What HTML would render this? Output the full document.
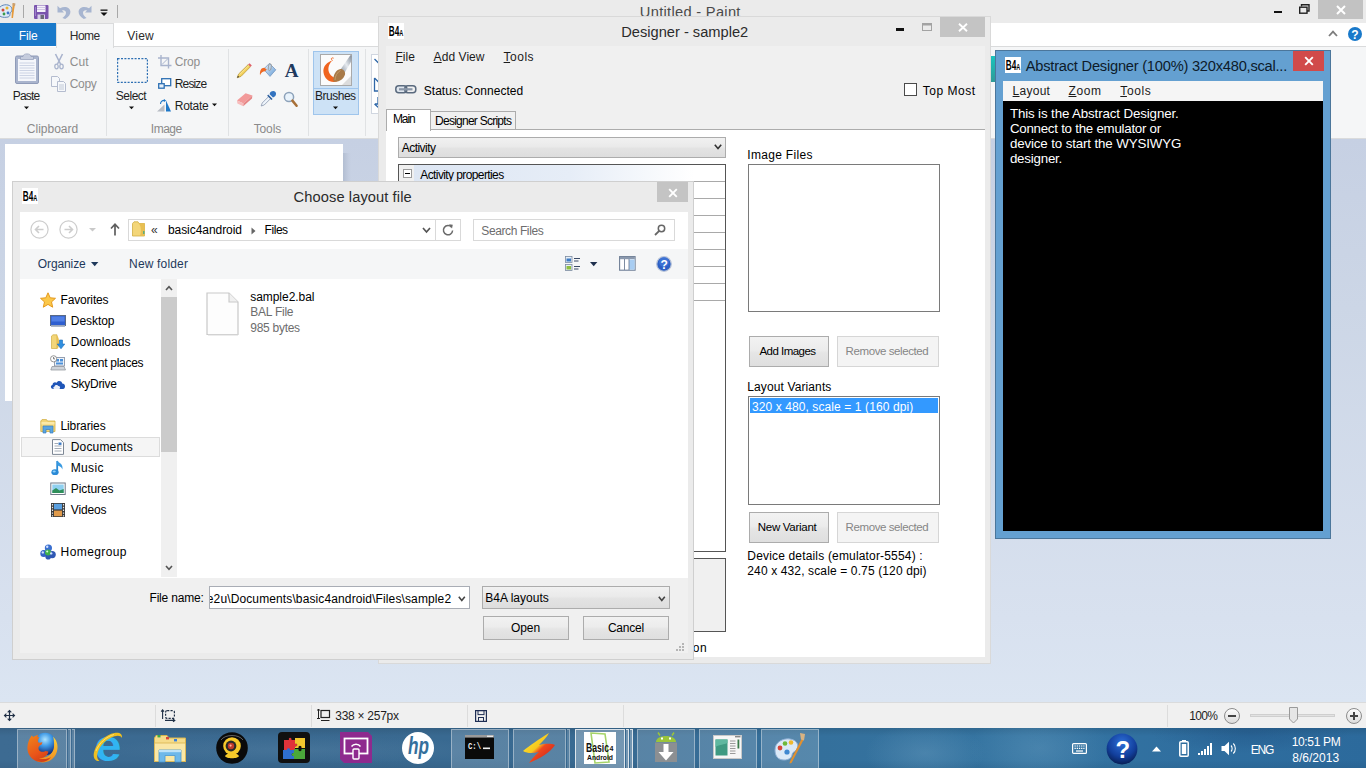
<!DOCTYPE html>
<html>
<head>
<meta charset="utf-8">
<title>Untitled - Paint</title>
<style>
*{box-sizing:border-box;margin:0;padding:0}
html,body{width:1366px;height:768px;overflow:hidden;background:#d5deec;font-family:"Liberation Sans",sans-serif;font-size:12px;color:#000}
.a{position:absolute}
.t{position:absolute;white-space:nowrap;line-height:1}
svg{position:absolute;overflow:visible}
/* ---------- Paint ---------- */
#paint{left:0;top:0;width:1366px;height:728px;background:#ebebeb}
#ptabs{left:0;top:23px;width:1366px;height:24px;background:#fff}
#pribbon{left:0;top:47px;width:1366px;height:92px;background:#f5f6f7;border-bottom:1px solid #dadbdc}
#pwork{left:0;top:139px;width:1366px;height:563px;background:linear-gradient(#c6d0e3,#ccd6e6 30%,#d8e1ef 85%,#dbe5f2)}
#pstatus{left:0;top:702px;width:1366px;height:26px;background:#f0f0f0;border-top:1px solid #dadbdc}
#taskbar{left:0;top:728px;width:1366px;height:40px;background:#2f6793}
.rt{position:absolute;white-space:nowrap;line-height:1;font-size:12px;color:#1e1e1e}
.rg{color:#8d8d8d}
/* ---------- Designer ---------- */
#designer{left:378px;top:16px;width:613px;height:648px;background:#ebebeb;border:1px solid #d9d9d9}
#dcontent{left:386px;top:46px;width:599px;height:611px;background:#f0f0f0}
#dwhite{left:386px;top:130px;width:599px;height:527px;background:#fff}
.ms{font-family:"Liberation Sans",sans-serif;font-size:11px}
/* ---------- Abstract designer ---------- */
#abs{left:995px;top:50px;width:336px;height:489px;background:#64a0d1;border:1px solid #4b769b}
#absmenu{left:1003px;top:81px;width:320px;height:20px;background:#f5f5f5}
#absblack{left:1003px;top:101px;width:320px;height:430px;background:#000}
/* ---------- Dialog ---------- */
#dlg{left:12px;top:181px;width:682px;height:479px;background:#ebebeb;border:1px solid #cfcfcf}
#dlgin{left:20px;top:212px;width:668px;height:441px;background:#f0f0f0}
#dlgnav{left:20px;top:212px;width:668px;height:37px;background:#fff}
#dlgtool{left:20px;top:249px;width:668px;height:30px;background:#f5f6f7}
#dlgbody{left:20px;top:279px;width:668px;height:299px;background:#fff}
.se{font-family:"Liberation Sans",sans-serif;font-size:12px;color:#000}
</style>
</head>
<body>
<!-- ================= PAINT WINDOW ================= -->
<div id="paint" class="a"></div>
<div id="ptabs" class="a"></div>
<div id="pribbon" class="a"></div>
<div id="pwork" class="a"></div>
<div id="pstatus" class="a"></div>
<svg style="left:0px;top:2px" width="17" height="18" viewBox="0 0 17 18"><path d="M-2 10 C-2 4 4 2 8 3 C12 4 13 8 11 10 C9 12 11 14 8 15 C3 16 -2 15 -2 10Z" fill="#dfeaf6" stroke="#5f86b8" stroke-width="1"/>
<circle cx="3" cy="8" r="1.5" fill="#d04a3a"/><circle cx="7" cy="6" r="1.5" fill="#e8b532"/><circle cx="4" cy="12" r="1.4" fill="#3a9a4a"/><circle cx="8" cy="11" r="1.4" fill="#3f77c9"/>
<path d="M13 1 L15 2 L14 8 L13 16 L11.5 16 L12 8Z" fill="#e59a3c"/><path d="M12.5 1 L15.5 1.5 L15 4 L12.5 3.5Z" fill="#c9a070"/></svg>
<div class="a" style="left:23px;top:5px;width:1px;height:13px;background:#a8a8a8;"></div>
<svg style="left:34px;top:5px" width="15" height="15" viewBox="0 0 15 15"><rect x="0" y="0" width="14.5" height="14" rx="1" fill="#7a54ad"/><rect x="3" y="0.5" width="8.5" height="6.5" fill="#f4f0fa"/><rect x="3" y="2.2" width="8.5" height="0.8" fill="#c9bde0"/><rect x="3" y="4.2" width="8.5" height="0.8" fill="#c9bde0"/><rect x="3.5" y="9.5" width="7.5" height="4.5" fill="#d9d0ea"/><rect x="6.5" y="10" width="3.5" height="4" fill="#6b6b78"/><rect x="1" y="2" width="1" height="9" fill="#9d80c8"/></svg>
<svg style="left:57px;top:5px" width="14" height="14" viewBox="0 0 14 14"><path d="M.5 .8 L.5 7.5 L7 7.5 L5 5.4 C7 4.6 9 5.6 9 7.8 C9 9.8 7.6 11.4 5.4 13 L8.2 14 C11.8 11.8 13.6 9.4 13.4 6.6 C13.2 2.4 8 .4 3 3.2Z" fill="#a7b5d0"/></svg>
<svg style="left:78px;top:5px" width="14" height="14" viewBox="0 0 14 14"><path d="M13.5 .8 L13.5 7.5 L7 7.5 L9 5.4 C7 4.6 5 5.6 5 7.8 C5 9.8 6.4 11.4 8.6 13 L5.8 14 C2.2 11.8 .4 9.4 .6 6.6 C.8 2.4 6 .4 11 3.2Z" fill="#a7b5d0"/></svg>
<svg style="left:100px;top:9px" width="8" height="8" viewBox="0 0 8 8"><rect x="0.5" y="0.5" width="7" height="1.3" fill="#111"/><path d="M0.5 3.5 L7.5 3.5 L4 7Z" fill="#111"/></svg>
<div class="a" style="left:117px;top:5px;width:1px;height:13px;background:#a8a8a8;"></div>
<div class="t" style="left:639.8px;top:5px;font-size:14.67px;color:#4a4a4a;letter-spacing:0.30px;">Untitled - Paint</div>
<div class="a" style="left:1274px;top:11px;width:8px;height:2px;background:#111;"></div>
<svg style="left:1299px;top:4px" width="11" height="10" viewBox="0 0 11 10"><path d="M2.5 2.5 V0.8 H10 V7 H8" fill="none" stroke="#222" stroke-width="1.4"/><rect x="0.7" y="3.2" width="7.3" height="6" fill="none" stroke="#222" stroke-width="1.4"/></svg>
<div class="a" style="left:1318px;top:0px;width:45px;height:19px;background:#c2c2c2;"></div>
<svg style="left:1336px;top:5px" width="10" height="10" viewBox="0 0 10 10"><path d="M1 1 L9 9 M9 1 L1 9" stroke="#fff" stroke-width="2"/></svg>
<div class="a" style="left:0px;top:23px;width:56px;height:23px;background:#1979ca;"></div>
<div class="t" style="left:18.8px;top:30px;font-size:12px;color:#fff;letter-spacing:-0.15px;">File</div>
<div class="a" style="left:56px;top:23px;width:58px;height:25px;background:#f5f6f7;border:1px solid #dadbdc;border-bottom:none;"></div>
<div class="a" style="left:114px;top:46px;width:1252px;height:1px;background:#dadbdc;"></div>
<div class="t" style="left:69.8px;top:30px;font-size:12px;color:#2b2b2b;letter-spacing:-0.54px;">Home</div>
<div class="t" style="left:127.3px;top:30px;font-size:12px;color:#2b2b2b;letter-spacing:0.20px;">View</div>
<svg style="left:1328px;top:30px" width="10" height="7" viewBox="0 0 10 7"><path d="M1 6 L5 1.6 L9 6" fill="none" stroke="#7d7d7d" stroke-width="1.8"/></svg>
<div class="a" style="left:1348px;top:27px;width:14px;height:14px;background:#1979ca;border-radius:7px;"></div>
<div class="t" style="left:1351.3px;top:29px;font-size:12px;color:#fff;font-weight:bold;">?</div>
<svg style="left:15px;top:53px" width="25" height="32" viewBox="0 0 25 32"><rect x="0.5" y="3" width="23" height="27.5" rx="1.5" fill="#a9b4cd" stroke="#8f9bb8"/><rect x="3" y="6" width="18" height="22" fill="#f4f6fb"/>
<path d="M8 3.5 C8 0 16 0 16 3.5 L18.5 3.5 L18.5 6.5 L5.5 6.5 L5.5 3.5Z" fill="#c5ccdd" stroke="#8f9bb8" stroke-width=".7"/>
<g stroke="#c3cbe0" stroke-width=".8"><path d="M4.5 10h15M4.5 12.5h15M4.5 15h15M4.5 17.5h15M4.5 20h15M4.5 22.5h15M4.5 25h15"/></g></svg>
<div class="t" style="left:12.8px;top:90px;font-size:12px;color:#1e1e1e;letter-spacing:-0.82px;">Paste</div>
<svg style="left:24px;top:106px" width="6" height="4" viewBox="0 0 6 4"><path d="M0 0.5 H5 L2.5 3.2Z" fill="#111"/></svg>
<svg style="left:54px;top:54px" width="10" height="16" viewBox="0 0 10 16"><path d="M1.5 0 L6.5 10 M8.5 0 L3.5 10" stroke="#a9b4cd" stroke-width="1.6" fill="none"/><ellipse cx="2.5" cy="12.5" rx="1.7" ry="2.4" fill="none" stroke="#a9b4cd" stroke-width="1.3"/><ellipse cx="7.5" cy="12.5" rx="1.7" ry="2.4" fill="none" stroke="#a9b4cd" stroke-width="1.3"/></svg>
<div class="t" style="left:69.8px;top:56px;font-size:12px;color:#8e8e8e;letter-spacing:0.11px;">Cut</div>
<svg style="left:51px;top:76px" width="16" height="16" viewBox="0 0 16 16"><path d="M.5 .5h6l2 2v8h-8z" fill="#f6f8fb" stroke="#b4bccf"/><path d="M6.5 5.5h6l2 2v8h-8z" fill="#f6f8fb" stroke="#b4bccf"/><path d="M8 9h5M8 11h5M8 13h5" stroke="#b4bccf" stroke-width=".8"/></svg>
<div class="t" style="left:69.8px;top:78px;font-size:12px;color:#8e8e8e;letter-spacing:-0.37px;">Copy</div>
<div class="t" style="left:26.8px;top:123px;font-size:12px;color:#8a8a8a;letter-spacing:0.00px;">Clipboard</div>
<div class="a" style="left:106px;top:49px;width:1px;height:87px;background:#e0e2e4;"></div>
<svg style="left:117px;top:58px" width="31" height="25" viewBox="0 0 31 25"><rect x=".6" y=".6" width="29.8" height="23.8" fill="none" stroke="#2c6fb3" stroke-width="1.2" stroke-dasharray="2 1.4"/></svg>
<div class="t" style="left:115.8px;top:90px;font-size:12px;color:#1e1e1e;letter-spacing:-0.49px;">Select</div>
<svg style="left:129px;top:106px" width="6" height="4" viewBox="0 0 6 4"><path d="M0 0.5 H5 L2.5 3.2Z" fill="#111"/></svg>
<svg style="left:158px;top:55px" width="14" height="14" viewBox="0 0 14 14"><path d="M3 0 V10.5 H13.5 M0 3 H10.5 V13.5" fill="none" stroke="#a9b4cd" stroke-width="1.4"/><path d="M4 9.5 L9.5 4" stroke="#a9b4cd" stroke-width="1"/></svg>
<div class="t" style="left:174.8px;top:56px;font-size:12px;color:#8e8e8e;letter-spacing:-0.20px;">Crop</div>
<svg style="left:158px;top:78px" width="14" height="12" viewBox="0 0 14 12"><rect x="3.7" y=".7" width="9" height="7" fill="#fff" stroke="#2c6fb3" stroke-width="1.3"/><rect x=".7" y="5.7" width="5.5" height="4.5" fill="#e7f0fa" stroke="#2c6fb3" stroke-width="1.3"/></svg>
<div class="t" style="left:174.8px;top:78px;font-size:12px;color:#1e1e1e;letter-spacing:-0.86px;">Resize</div>
<svg style="left:156px;top:99px" width="16" height="13" viewBox="0 0 16 13"><path d="M1 12.5 L8.5 5.5 V12.5Z" fill="#b7bcc4"/><path d="M10 1.5 L15 12.5 H10Z" fill="#1f78c8"/><path d="M4.5 5 C4.5 2 7 1 9 1.6" fill="none" stroke="#1f78c8" stroke-width="1.1"/><path d="M8 0 L10.2 1.8 L7.8 3Z" fill="#1f78c8"/></svg>
<div class="t" style="left:174.8px;top:100px;font-size:12px;color:#1e1e1e;letter-spacing:-0.29px;">Rotate</div>
<svg style="left:212px;top:103px" width="6" height="4" viewBox="0 0 6 4"><path d="M0 0.5 H5 L2.5 3.2Z" fill="#111"/></svg>
<div class="t" style="left:150.8px;top:123px;font-size:12px;color:#8a8a8a;letter-spacing:-0.49px;">Image</div>
<div class="a" style="left:228px;top:49px;width:1px;height:87px;background:#e0e2e4;"></div>
<svg style="left:236px;top:62px" width="17" height="17" viewBox="0 0 17 17"><path d="M1.2 15.8 L2.6 12 L12.2 2.6 L14.4 4.8 L5 14.4Z" fill="#f3d15a" stroke="#b49436" stroke-width=".7"/><path d="M3.4 12.8 L12.9 3.4" stroke="#fbe9a0" stroke-width=".9"/><path d="M12.2 2.6 L13.6 1.2 L15.8 3.4 L14.4 4.8Z" fill="#e0606a"/><path d="M1.2 15.8 L1.9 13.8 L3.2 15.1Z" fill="#333"/></svg>
<svg style="left:259px;top:61px" width="18" height="18" viewBox="0 0 18 18"><defs><linearGradient id="bk" x1="0" y1="0" x2="1" y2="1"><stop offset="0" stop-color="#f4f8fd"/><stop offset="1" stop-color="#5f9ad6"/></linearGradient></defs><path d="M4.6 8.2 L10.4 2.4 L16.8 8.8 L11 15.4Z" fill="url(#bk)" stroke="#7f9fc6" stroke-width=".9"/><ellipse cx="10.8" cy="6.2" rx="1.5" ry="3.6" fill="none" stroke="#9a9a9a" stroke-width=".9" transform="rotate(8 10.8 6.2)"/><path d="M5.4 6.8 C2.4 6.6 .6 9.4 1 14.2 C2.2 11.2 3.8 10.4 6.2 10.2 L7.8 8.6Z" fill="#ee6a26"/></svg>
<div class="t" style="left:284.7px;top:61px;font-size:19px;color:#1f3a5f;font-weight:bold;font-family:'Liberation Serif',serif;">A</div>
<svg style="left:236px;top:91px" width="18" height="16" viewBox="0 0 18 16"><path d="M1 9.4 L9.6 2.2 L16.4 4.6 L7.6 12.4Z" fill="#f29a9a"/><path d="M1 9.4 L7.6 12.4 L7.2 15.2 L1.4 12.4Z" fill="#f7bcbc"/><path d="M7.6 12.4 L16.4 4.6 L16 7.4 L7.2 15.2Z" fill="#e68484"/></svg>
<svg style="left:260px;top:90px" width="17" height="17" viewBox="0 0 17 17"><path d="M1.2 16 L2.2 13 L8.8 6.4 L10.8 8.4 L4.2 15Z" fill="#eef4fb" stroke="#8a98ae" stroke-width=".8"/><path d="M8.2 4.6 L12.6 9 L11.4 10 L7.2 5.8Z" fill="#2d5f9e"/><path d="M9.6 4.2 C9.8 1.6 13.4 .2 15.2 1.8 C17 3.6 15.6 7 13 7.4Z" fill="#3273c0"/></svg>
<svg style="left:283px;top:91px" width="16" height="17" viewBox="0 0 16 17"><circle cx="6" cy="6" r="4.6" fill="#e9f3fc" stroke="#8da2ba" stroke-width="1.5"/><path d="M9.4 9.6 L13.6 14.8" stroke="#a87038" stroke-width="2.5" stroke-linecap="round"/></svg>
<div class="t" style="left:253.7px;top:123px;font-size:12px;color:#8a8a8a;letter-spacing:-0.13px;">Tools</div>
<div class="a" style="left:308px;top:49px;width:1px;height:87px;background:#e0e2e4;"></div>
<div class="a" style="left:313px;top:51px;width:46px;height:64px;background:#cde2f6;border:1px solid #9fc5ec;"></div>
<div class="a" style="left:314px;top:88px;width:44px;height:1px;background:#9fc5ec;"></div>
<div class="a" style="left:320px;top:54px;width:32px;height:32px;background:#fbfbfb;border:1px solid #a9a9a9;"></div>
<svg style="left:320px;top:54px" width="32" height="32" viewBox="0 0 32 32"><defs><linearGradient id="bh" x1="0" y1="1" x2="1" y2="0"><stop offset="0" stop-color="#8c96a3"/><stop offset=".5" stop-color="#e6eaef"/><stop offset="1" stop-color="#7d8794"/></linearGradient></defs><path d="M22 31 L31 22 L31 31Z" fill="#dcdcdc"/><path d="M12.5 6.5 C8 7.5 2.5 12 3.5 18.5 C4.5 25 10 29.5 17 27.5 L21 24 C16 25.5 9.5 22.5 8.5 16.5 C8 12.5 10 8.5 12.5 6.5Z" fill="#f0641e"/><path d="M12.5 6.5 C10.5 5 11.5 3.2 13.6 4.2" stroke="#f0641e" stroke-width="1" fill="none"/>
<path d="M20.5 15.5 L30.5 1 L31.5 2 L31.5 7 L24.5 19Z" fill="url(#bh)"/><path d="M13.5 27.5 C12.5 21.5 16 15.5 20.5 15 C23.5 15 25.5 17.5 25 20.5 C23.5 25.5 18.5 28.5 13.5 27.5Z" fill="#a87a48"/><path d="M15 26 C15 22 17.5 18 20.5 16.5" stroke="#c49a66" stroke-width="1" fill="none"/></svg>
<div class="t" style="left:314.9px;top:90px;font-size:12px;color:#1e1e1e;letter-spacing:-0.47px;">Brushes</div>
<svg style="left:333px;top:106px" width="6" height="4" viewBox="0 0 6 4"><path d="M0 0.5 H5 L2.5 3.2Z" fill="#111"/></svg>
<div class="a" style="left:365px;top:49px;width:1px;height:87px;background:#e0e2e4;"></div>
<div class="a" style="left:371px;top:54px;width:10px;height:60px;background:#fff;border:1px solid #d0d6e0;"></div>
<svg style="left:373px;top:56px" width="6" height="56" viewBox="0 0 6 56"><path d="M1.5 3 L6 7.5 M1.5 22 L1.5 35 L6 35 M1.5 22 L6 26.5 M5 41 V48 H2 M1.5 48 L6 52" fill="none" stroke="#2f67a8" stroke-width="1.3"/></svg>
<div class="a" style="left:991px;top:56px;width:5px;height:26px;background:linear-gradient(#19c4bd,#2f9a97);"></div>
<div class="a" style="left:343px;top:153px;width:8px;height:255px;background:linear-gradient(90deg,#b3bed2,#c3cde0 70%,rgba(200,210,228,0));"></div>
<div class="a" style="left:12px;top:401px;width:338px;height:7px;background:linear-gradient(#b9c4d7,rgba(205,214,230,0));"></div>
<div class="a" style="left:5px;top:144px;width:338px;height:257px;background:#fff;"></div>
<svg style="left:4px;top:710px" width="11" height="11" viewBox="0 0 11 11"><path d="M5.5 0.8 V10.2 M0.8 5.5 H10.2" stroke="#1f2f45" stroke-width="1.2"/><path d="M3.7 2.4 L5.5 .5 L7.3 2.4 M3.7 8.6 L5.5 10.5 L7.3 8.6 M2.4 3.7 L.5 5.5 L2.4 7.3 M8.6 3.7 L10.5 5.5 L8.6 7.3" fill="none" stroke="#1f2f45" stroke-width="1.1"/></svg>
<div class="a" style="left:155px;top:705px;width:1px;height:22px;background:#dcdcdc;"></div>
<div class="a" style="left:311px;top:705px;width:1px;height:22px;background:#dcdcdc;"></div>
<div class="a" style="left:467px;top:705px;width:1px;height:22px;background:#dcdcdc;"></div>
<div class="a" style="left:623px;top:705px;width:1px;height:22px;background:#dcdcdc;"></div>
<div class="a" style="left:1167px;top:705px;width:1px;height:22px;background:#dcdcdc;"></div>
<svg style="left:161px;top:709px" width="15" height="13" viewBox="0 0 15 13"><rect x="4.6" y="1.6" width="8.8" height="7.8" rx="1.5" fill="none" stroke="#1f2f45" stroke-width="1.2" stroke-dasharray="2.2 1.2"/><path d="M1.6 10 V1 M.2 2.6 L1.6 .8 L3 2.6 M4 11.4 H13.6 M12 10 L13.8 11.4 L12 12.8" fill="none" stroke="#1f2f45" stroke-width="1.1"/></svg>
<svg style="left:317px;top:709px" width="14" height="12" viewBox="0 0 14 12"><rect x="4" y="1.5" width="8.5" height="7" fill="none" stroke="#222" stroke-width="1.2"/><path d="M1.5 0 V10 M0 1 H3 M0 9.5 H3 M4 11.5 H12.5" stroke="#222" stroke-width="1"/></svg>
<div class="t" style="left:335.3px;top:710px;font-size:12px;color:#1e1e1e;letter-spacing:-0.27px;">338 × 257px</div>
<svg style="left:475px;top:710px" width="12" height="12" viewBox="0 0 12 12"><rect x=".6" y=".6" width="10.8" height="10.8" fill="none" stroke="#1f2f55" stroke-width="1.2"/><rect x="3" y=".6" width="6" height="4" fill="none" stroke="#1f2f55" stroke-width="1"/><rect x="3.5" y="7.5" width="5" height="4" fill="none" stroke="#1f2f55" stroke-width="1"/></svg>
<div class="t" style="left:1189.3px;top:710px;font-size:12px;color:#1e1e1e;letter-spacing:-0.66px;">100%</div>
<div class="a" style="left:1224px;top:708px;width:16px;height:16px;background:linear-gradient(#fdfdfd,#dcdcdc);border:1px solid #8c8c8c;border-radius:8px;"></div>
<div class="a" style="left:1228px;top:715px;width:8px;height:2px;background:#444;"></div>
<div class="a" style="left:1250px;top:714px;width:85px;height:3px;background:#e2e2e2;border:1px solid #cfcfcf;"></div>
<svg style="left:1289px;top:707px" width="9" height="17" viewBox="0 0 9 17"><path d="M.5 .5 H8.5 V12 L4.5 16 L.5 12Z" fill="#e6e6e6" stroke="#9a9a9a"/></svg>
<div class="a" style="left:1346px;top:708px;width:16px;height:16px;background:linear-gradient(#fdfdfd,#dcdcdc);border:1px solid #8c8c8c;border-radius:8px;"></div>
<div class="a" style="left:1350px;top:715px;width:8px;height:2px;background:#444;"></div>
<div class="a" style="left:1353px;top:712px;width:2px;height:8px;background:#444;"></div>


<!-- ================= TASKBAR ================= -->
<div id="taskbar" class="a"></div>
<div class="a" style="left:0px;top:728px;width:1366px;height:40px;background:linear-gradient(90deg,#3d6b92 0%,#3a6990 20%,#386a92 45%,#34709c 60%,#3575a2 75%,#2f6e9f 88%,#2c6a9c 100%);"></div>
<div class="a" style="left:0px;top:728px;width:1366px;height:40px;background:linear-gradient(rgba(0,0,0,.10),rgba(0,0,0,0) 20%,rgba(0,0,0,0) 80%,rgba(0,0,0,.06));"></div>
<div class="a" style="left:0px;top:728px;width:1366px;height:40px;background:radial-gradient(ellipse 60px 30px at 925px 25px,rgba(130,175,205,.28),rgba(130,175,205,0)),radial-gradient(ellipse 70px 40px at 1040px 20px,rgba(130,175,205,.25),rgba(130,175,205,0)),radial-gradient(ellipse 200px 14px at 300px 22px,rgba(120,160,190,.18),rgba(120,160,190,0)),radial-gradient(ellipse 100px 20px at 1250px 5px,rgba(20,60,110,.25),rgba(20,60,110,0));"></div>
<div class="a" style="left:68px;top:729px;width:3px;height:39px;background:rgba(255,255,255,.17);border:1px solid rgba(255,255,255,.38);border-left:none;border-bottom:none;"></div>
<div class="a" style="left:72px;top:729px;width:3px;height:39px;background:rgba(255,255,255,.17);border:1px solid rgba(255,255,255,.38);border-left:none;border-bottom:none;"></div>
<div class="a" style="left:17px;top:729px;width:50px;height:39px;background:rgba(255,255,255,.17);border:1px solid rgba(255,255,255,.38);border-bottom:none;"></div>
<svg style="left:26px;top:731px" width="33" height="33" viewBox="0 0 33 33"><defs><radialGradient id="fg" cx=".5" cy=".3" r=".65"><stop offset="0" stop-color="#aee4ff"/><stop offset=".45" stop-color="#3f9ae6"/><stop offset="1" stop-color="#12307e"/></radialGradient><linearGradient id="fo" x1=".2" y1="0" x2=".8" y2="1"><stop offset="0" stop-color="#ef7f1a"/><stop offset=".6" stop-color="#e8531a"/><stop offset="1" stop-color="#c93a16"/></linearGradient><linearGradient id="fy" x1="0" y1="0" x2="0" y2="1"><stop offset="0" stop-color="#fbd23a"/><stop offset="1" stop-color="#f08a1c"/></linearGradient></defs>
<circle cx="19" cy="13" r="11.2" fill="url(#fg)"/>
<path d="M27 5.5 C31.5 9.5 33 17 30 23 C27 29.5 20 32.5 13 31 C8.5 30 12 26 16 26.5 C22 27 27.5 22 28 16 C28.3 12 28 8.5 27 5.5Z" fill="url(#fy)"/>
<path d="M3.8 7.5 L5.6 4.6 L7.4 6 C9 4.6 11 4 12.6 4.2 L11.2 6 L13.4 6.2 C12 8 11.6 10 12.4 11.6 C14 12 15.4 11.6 16.4 11 L15.6 13.6 C13.4 14.4 12 16 12.6 18.2 C13.6 21 17.2 21.6 19.4 20 L22.4 20.4 C21.6 24.6 17.6 27.6 13 27 C16 28.4 21 28.6 25 26 C21.6 31 14.6 32.4 9 29.6 C3.4 26.8 .6 20.6 1.6 14.6 C2 11.8 2.8 9.4 3.8 7.5Z" fill="url(#fo)"/></svg>
<svg style="left:90px;top:730px" width="36" height="36" viewBox="0 0 36 36"><text x="4.6" y="31.2" font-family="Liberation Sans, sans-serif" font-weight="bold" font-size="45" fill="#31b4f2" textLength="27" lengthAdjust="spacingAndGlyphs">e</text>
<path d="M9.5 31 C5.5 31.5 2 28 4.5 20.5 C7.5 12 16 4.5 24.5 3 C29.5 2.2 32.5 4 32 8 C31 5.6 28 5.2 24.5 6.2 C17 8.4 10 15 7.8 22 C6.4 26.6 7.4 29.4 9.5 31Z" fill="#f0c020"/><path d="M6 21 C9 13 16.5 6.5 24 4.5" fill="none" stroke="#fde27a" stroke-width=".9"/></svg>
<svg style="left:154px;top:734px" width="33" height="29" viewBox="0 0 33 29"><path d="M.5 4 L2 1.5 H13 L15 4 H31.5 V27.5 H.5Z" fill="#f6dc8a" stroke="#d9b44e" stroke-width="1"/><rect x="3.5" y="1" width="3" height="2.4" fill="#3aa845"/><rect x="12" y="3" width="3" height="2.4" fill="#d9453a"/><rect x="20" y="5" width="3" height="2.4" fill="#3a7fd9"/>
<path d="M.5 9 H31.5 V27.5 H.5Z" fill="#fae7a6" stroke="#d9b44e" stroke-width=".8"/><path d="M5 16 H27 V28 H21 V21.5 H11 V28 H5Z" fill="#6fb8ea" stroke="#4a97d0" stroke-width=".8"/><rect x="5" y="16" width="22" height="2.2" fill="#bfe2f8"/></svg>
<svg style="left:216px;top:732px" width="32" height="32" viewBox="0 0 32 32"><circle cx="16" cy="16" r="15.8" fill="#0a0a0a"/><circle cx="16" cy="14" r="8.8" fill="#f7c92a"/><path d="M9 24 C11 20 21 20 23 24 C22 27 10 27 9 24Z" fill="#f7c92a"/><circle cx="15" cy="14" r="5.4" fill="#2a2a2a"/><circle cx="15" cy="14" r="3.2" fill="#c0392b"/><circle cx="14.6" cy="13.6" r="1.1" fill="#ffb0a0"/><path d="M5 8 C9 2 23 2 27 8" fill="none" stroke="#fff" stroke-width="1" opacity=".35"/></svg>
<svg style="left:278px;top:732px" width="32" height="31" viewBox="0 0 32 31"><rect x="0" y="0" width="32" height="31" rx="4" fill="#101010"/><path d="M6 8 H11 C10 5 14 5 13.5 8 H17 V12 C20 11 20 15 17 14.5 V18 H6Z" fill="#e0333a"/><path d="M17 6 H27 V16 H23.5 C24 13 20 13 20.5 16 H17 V14.5 C20 15 20 11 17 12Z" fill="#f2c72e"/><path d="M5 18 H9 C8.5 15.5 12.5 15.5 12 18 H16 V21 C13 20.5 13 24.5 16 24 V27 H5Z" fill="#2f6fd0"/><path d="M16 17 H20.5 C20 20 24 20 23.5 17 H27 V27 H16 V24 C13 24.5 13 20.5 16 21Z" fill="#4aa83a"/></svg>
<svg style="left:340px;top:732px" width="32" height="31" viewBox="0 0 32 31"><path d="M0 0 H28 L32 4 V31 H4 L0 27Z" fill="#8e2a8e"/><rect x="4.5" y="6.5" width="23" height="15" fill="none" stroke="#fff" stroke-width="1.8"/><rect x="13" y="17" width="6" height="10" rx="1" fill="#8e2a8e" stroke="#fff" stroke-width="1.4"/><path d="M11.5 14.5 C13.5 11.5 18.5 11.5 20.5 14.5" fill="none" stroke="#fff" stroke-width="1.4"/></svg>
<svg style="left:402px;top:732px" width="32" height="32" viewBox="0 0 32 32"><circle cx="16" cy="16" r="16" fill="#fff"/><text x="6" y="22" font-family="Liberation Sans, sans-serif" font-style="italic" font-weight="bold" font-size="24" fill="#35709c" textLength="21" lengthAdjust="spacingAndGlyphs">hp</text></svg>
<div class="a" style="left:451px;top:729px;width:58px;height:39px;background:rgba(255,255,255,.17);border:1px solid rgba(255,255,255,.38);border-bottom:none;"></div>
<svg style="left:464.5px;top:735px" width="29" height="24" viewBox="0 0 29 24"><rect x="0" y="0" width="29" height="24" fill="#0a0a0a"/><rect x="0" y="0" width="29" height="2.6" fill="#9a9a9a"/><rect x="22" y=".6" width="6" height="1.4" fill="#e8e8e8"/><text x="3" y="14" font-family="Liberation Mono, monospace" font-weight="bold" font-size="9" fill="#f0f0f0" textLength="13" lengthAdjust="spacingAndGlyphs">C:\</text><rect x="18" y="12.5" width="7" height="1.6" fill="#f0f0f0"/></svg>
<div class="a" style="left:567px;top:729px;width:3px;height:39px;background:rgba(255,255,255,.17);border:1px solid rgba(255,255,255,.38);border-left:none;border-bottom:none;"></div>
<div class="a" style="left:513px;top:729px;width:53px;height:39px;background:rgba(255,255,255,.17);border:1px solid rgba(255,255,255,.38);border-bottom:none;"></div>
<svg style="left:522px;top:732px" width="34" height="31" viewBox="0 0 34 31"><defs><linearGradient id="lg" x1="0" y1="0" x2="1" y2="1"><stop offset="0" stop-color="#fff23a"/><stop offset=".45" stop-color="#f7c81e"/><stop offset=".55" stop-color="#f0481e"/><stop offset="1" stop-color="#c0181a"/></linearGradient></defs><path d="M27 1 C17 7 7 14 1 19 C6 22 12 21 17 20 C12 24 9 28 7 31 C17 27 29 20 33 13 C28 11 22 12 17 13 C21 9 25 5 27 1Z" fill="url(#lg)"/></svg>
<div class="a" style="left:626px;top:729px;width:3px;height:39px;background:rgba(255,255,255,.30);border:1px solid rgba(255,255,255,.75);border-left:none;border-bottom:none;"></div>
<div class="a" style="left:630px;top:729px;width:3px;height:39px;background:rgba(255,255,255,.30);border:1px solid rgba(255,255,255,.75);border-left:none;border-bottom:none;"></div>
<div class="a" style="left:575px;top:729px;width:50px;height:39px;background:rgba(255,255,255,.30);border:1px solid rgba(255,255,255,.75);border-bottom:none;"></div>
<div class="a" style="left:584px;top:732px;width:32px;height:32px;background:#fff;"></div>
<svg style="left:584px;top:732px" width="32" height="32" viewBox="0 0 32 32"><path d="M7 1 L21 2 L25 30 L11 31Z" fill="none" stroke="#a6d46a" stroke-width="1.6"/><text x="2" y="20" font-family="Liberation Sans, sans-serif" font-weight="bold" font-size="13" fill="#111" textLength="23" lengthAdjust="spacingAndGlyphs">Basic</text><text x="25.5" y="18.5" font-family="Liberation Sans, sans-serif" font-weight="bold" font-size="7" fill="#111">4</text><text x="3" y="28" font-family="Liberation Sans, sans-serif" font-weight="bold" font-size="7.5" fill="#111" textLength="26" lengthAdjust="spacingAndGlyphs">Android</text></svg>
<div class="a" style="left:637px;top:729px;width:58px;height:39px;background:rgba(255,255,255,.17);border:1px solid rgba(255,255,255,.38);border-bottom:none;"></div>
<svg style="left:655px;top:731px" width="23" height="32" viewBox="0 0 23 32"><path d="M1 11 C1 3 21 3 21 11Z" fill="#9bc53a"/><path d="M5 4.5 L3 1.5 M17 4.5 L19 1.5" stroke="#9bc53a" stroke-width="1.5"/><rect x="6" y="6.5" width="2" height="2" fill="#fff"/><rect x="14" y="6.5" width="2" height="2" fill="#fff"/><rect x="0" y="11.5" width="22" height="19.5" fill="#8c8f92"/><path d="M8.5 13 H13.5 V21 H18.5 L11 29.5 L3.5 21 H8.5Z" fill="#fff"/></svg>
<div class="a" style="left:699px;top:729px;width:58px;height:39px;background:rgba(255,255,255,.17);border:1px solid rgba(255,255,255,.38);border-bottom:none;"></div>
<svg style="left:713px;top:735px" width="29" height="24" viewBox="0 0 29 24"><rect x=".5" y=".5" width="28" height="23" fill="#f6f6f6" stroke="#c9c9c9"/><rect x="2.5" y="4.5" width="12" height="16" fill="#3f9a82"/><path d="M2.5 12 C7 9 11 10 14.5 8 V4.5 H2.5Z" fill="#5fb8a0"/><path d="M17 6 H22.5 M17 8.5 H22.5 M17 11 H22.5 M17 13.5 H22.5 M17 16 H22.5 M17 18.5 H22.5" stroke="#9a9a9a" stroke-width="1"/><rect x="24.5" y="4.5" width="1.8" height="9" fill="#3a7a4a"/><rect x="22" y="1" width="5.5" height="1.4" fill="#888"/></svg>
<div class="a" style="left:761px;top:729px;width:58px;height:39px;background:rgba(255,255,255,.17);border:1px solid rgba(255,255,255,.38);border-bottom:none;"></div>
<svg style="left:774px;top:731px" width="31" height="34" viewBox="0 0 31 34"><path d="M1 19 C1 11 9 7 16 8 C23 9 25 14 23 18 C21 21 18 21 18 24 C18 27 14 29 10 29 C4 29 1 25 1 19Z" fill="#dbe9f7" stroke="#8fb0d6" stroke-width="1"/><circle cx="6" cy="17" r="2.4" fill="#d8453a"/><circle cx="11" cy="12.5" r="2.3" fill="#6fb83a"/><circle cx="17" cy="11.5" r="2.3" fill="#f0b82e"/><circle cx="13" cy="21" r="2.6" fill="#3f87d0"/><path d="M27.5 8 L29.5 9 L17.5 32 L15.5 32.5 L16 30.5Z" fill="#e2902f"/><path d="M26 2 L31 3 L30 9.5 L27 8.5Z" fill="#d9b382"/></svg>
<svg style="left:1072px;top:743px" width="15" height="11" viewBox="0 0 15 11"><rect x=".6" y=".6" width="13.8" height="9.8" rx="1" fill="none" stroke="#fff" stroke-width="1.2"/><path d="M2.5 3 H12.5 M2.5 5.3 H12.5" stroke="#fff" stroke-width="1.2" stroke-dasharray="1.3 .9"/><path d="M4 8 H11" stroke="#fff" stroke-width="1.2"/></svg>
<svg style="left:1106px;top:733px" width="32" height="32" viewBox="0 0 32 32"><defs><radialGradient id="hg" cx=".5" cy=".3" r=".75"><stop offset="0" stop-color="#2d6fd8"/><stop offset=".6" stop-color="#123f9c"/><stop offset="1" stop-color="#061a4a"/></radialGradient></defs><circle cx="16" cy="16" r="15.4" fill="url(#hg)"/><text x="9.5" y="24.5" font-family="Liberation Sans, sans-serif" font-weight="bold" font-size="24" fill="#fff">?</text></svg>
<svg style="left:1152px;top:746px" width="9" height="6" viewBox="0 0 9 6"><path d="M0 5.5 L4.5 .5 L9 5.5Z" fill="#fff"/></svg>
<svg style="left:1179px;top:740px" width="10" height="17" viewBox="0 0 10 17"><rect x="3" y="0" width="4" height="2" fill="#fff"/><rect x=".8" y="1.8" width="8.4" height="14.4" rx="1" fill="none" stroke="#fff" stroke-width="1.5"/><rect x="2.8" y="4" width="4.4" height="10" fill="#fff"/></svg>
<svg style="left:1198px;top:743px" width="15" height="12" viewBox="0 0 15 12"><g fill="#fff"><rect x="0" y="10" width="2" height="2"/><rect x="3" y="8" width="2" height="4"/><rect x="6" y="6" width="2" height="6"/><rect x="9" y="3" width="2" height="9"/><rect x="12" y="0" width="2" height="12"/></g></svg>
<svg style="left:1221px;top:741px" width="17" height="15" viewBox="0 0 17 15"><path d="M.5 5 H3.5 L8 .8 V14.2 L3.5 10 H.5Z" fill="#fff"/><path d="M10 4.5 C11.5 6 11.5 9 10 10.5 M12.3 2.5 C15 5 15 10 12.3 12.5" fill="none" stroke="#fff" stroke-width="1.1"/></svg>
<div class="t" style="left:1250.7px;top:744px;font-size:12px;color:#fff;letter-spacing:-1.20px;">ENG</div>
<div class="t" style="left:1291.7px;top:736px;font-size:12px;color:#fff;letter-spacing:-0.34px;">10:51 PM</div>
<div class="t" style="left:1292.3px;top:752px;font-size:12px;color:#fff;letter-spacing:0.01px;">8/6/2013</div>


<!-- ================= DESIGNER WINDOW ================= -->
<div id="designer" class="a"></div>
<div id="dcontent" class="a"></div>
<div id="dwhite" class="a"></div>
<div class="a" style="left:388px;top:23px;width:16px;height:16px;background:#fff;"></div>
<svg style="left:388px;top:23px" width="16" height="16" viewBox="0 0 16 16"><text x=".8" y="13" font-family="Liberation Sans, sans-serif" font-weight="bold" font-size="14" textLength="14.5" lengthAdjust="spacingAndGlyphs" fill="#000">B4<tspan font-size="9.5">A</tspan></text></svg>
<div class="t" style="left:621.3px;top:25px;font-size:14.67px;color:#2b2b2b;letter-spacing:-0.01px;">Designer - sample2</div>
<div class="a" style="left:896px;top:28px;width:8px;height:3px;background:#111;"></div>
<svg style="left:922px;top:23px" width="10" height="8" viewBox="0 0 10 8"><rect x=".5" y=".5" width="9" height="7" fill="none" stroke="#a3a3a3"/><rect x=".5" y=".5" width="9" height="2" fill="#a3a3a3"/></svg>
<div class="a" style="left:940px;top:17px;width:45px;height:20px;background:#c4c4c4;"></div>
<svg style="left:958px;top:23px" width="10" height="9" viewBox="0 0 10 9"><path d="M1 .8 L9 8.2 M9 .8 L1 8.2" stroke="#fff" stroke-width="1.9"/></svg>
<div class="t" style="left:395.5px;top:51px;font-size:12px;color:#1b1b1b;letter-spacing:-0.01px;"><u>F</u>ile</div>
<div class="t" style="left:433.6px;top:51px;font-size:12px;color:#1b1b1b;letter-spacing:0.06px;"><u>A</u>dd View</div>
<div class="t" style="left:503.6px;top:51px;font-size:12px;color:#1b1b1b;letter-spacing:0.50px;"><u>T</u>ools</div>
<svg style="left:395px;top:85px" width="22" height="9" viewBox="0 0 22 9"><rect x=".8" y=".8" width="11" height="7" rx="3" fill="#dfe6ee" stroke="#5a6a7e" stroke-width="1.5"/><rect x="9.8" y=".8" width="11" height="7" rx="3" fill="none" stroke="#5a6a7e" stroke-width="1.5"/><rect x="4" y="3.2" width="13.5" height="2.2" fill="#8a97a8"/></svg>
<div class="t" style="left:423.7px;top:85px;font-size:12px;color:#000;letter-spacing:0.05px;">Status: Connected</div>
<div class="a" style="left:904px;top:83px;width:13px;height:13px;background:#fff;border:1px solid #4a4a4a;"></div>
<div class="t" style="left:922.7px;top:85px;font-size:12px;color:#000;letter-spacing:0.53px;">Top Most</div>
<div class="a" style="left:386px;top:129px;width:599px;height:1px;background:#acacac;"></div>
<div class="a" style="left:430px;top:111px;width:86px;height:19px;background:#f0f0f0;border:1px solid #acacac;"></div>
<div class="a" style="left:386px;top:109px;width:45px;height:22px;background:#fff;border:1px solid #acacac;border-bottom:none;"></div>
<div class="t" style="left:392.9px;top:113px;font-size:12px;color:#000;letter-spacing:-1.07px;">Main</div>
<div class="t" style="left:435.1px;top:115px;font-size:12px;color:#000;letter-spacing:-0.75px;">Designer Scripts</div>
<div class="a" style="left:398px;top:137px;width:328px;height:21px;background:linear-gradient(#f1f1f1,#eaeaea 45%,#e3e3e3 55%,#dddddd);border:1px solid #acacac;"></div>
<div class="t" style="left:401.7px;top:142px;font-size:12px;color:#000;letter-spacing:-0.53px;">Activity</div>
<svg style="left:714px;top:144px" width="8" height="6" viewBox="0 0 8 6"><path d="M.8 .8 L4 4.6 L7.2 .8" fill="none" stroke="#333" stroke-width="1.6"/></svg>
<div class="a" style="left:398px;top:164px;width:328px;height:388px;background:#fff;border:1px solid #555;"></div>
<div class="a" style="left:399px;top:165px;width:15px;height:386px;background:#f0f0f0;"></div>
<div class="a" style="left:414px;top:165px;width:311px;height:16px;background:linear-gradient(90deg,#dde6f3,#e6edf7 50%,#fff 90%);"></div>
<div class="a" style="left:403px;top:169px;width:9px;height:9px;background:#fff;border:1px solid #9a9a9a;"></div>
<div class="a" style="left:405px;top:173px;width:5px;height:1px;background:#000;"></div>
<div class="t" style="left:420.3px;top:169px;font-size:12px;color:#000;letter-spacing:-0.60px;">Activity properties</div>
<div class="a" style="left:414px;top:181px;width:311px;height:1px;background:#a9a9a9;"></div>
<div class="a" style="left:414px;top:198px;width:311px;height:1px;background:#a9a9a9;"></div>
<div class="a" style="left:414px;top:215px;width:311px;height:1px;background:#a9a9a9;"></div>
<div class="a" style="left:414px;top:232px;width:311px;height:1px;background:#a9a9a9;"></div>
<div class="a" style="left:414px;top:249px;width:311px;height:1px;background:#a9a9a9;"></div>
<div class="a" style="left:414px;top:266px;width:311px;height:1px;background:#a9a9a9;"></div>
<div class="a" style="left:414px;top:283px;width:311px;height:1px;background:#a9a9a9;"></div>
<div class="a" style="left:414px;top:300px;width:311px;height:1px;background:#a9a9a9;"></div>
<div class="a" style="left:560px;top:182px;width:1px;height:120px;background:#a9a9a9;"></div>
<div class="a" style="left:398px;top:558px;width:328px;height:74px;background:#f0f0f0;border:1px solid #555;"></div>
<div class="t" style="left:639.3px;top:642px;font-size:12px;color:#000;letter-spacing:0.74px;">Description</div>
<div class="t" style="left:747.3px;top:149px;font-size:12px;color:#000;letter-spacing:0.31px;">Image Files</div>
<div class="a" style="left:748px;top:164px;width:192px;height:148px;background:#fff;border:1px solid #7a7a7a;"></div>
<div class="a" style="left:749px;top:336px;width:80px;height:31px;background:linear-gradient(#f2f2f2,#ececec 45%,#e5e5e5 55%,#dfdfdf);border:1px solid #acacac;"></div>
<div class="t" style="left:759.4px;top:346px;font-size:11.5px;color:#000;letter-spacing:-0.52px;">Add Images</div>
<div class="a" style="left:837px;top:336px;width:102px;height:31px;background:#f4f4f4;border:1px solid #d6d6d6;"></div>
<div class="t" style="left:845.6px;top:346px;font-size:11.5px;color:#868686;letter-spacing:-0.41px;">Remove selected</div>
<div class="t" style="left:747.3px;top:381px;font-size:12px;color:#000;letter-spacing:0.11px;">Layout Variants</div>
<div class="a" style="left:748px;top:396px;width:192px;height:109px;background:#fff;border:1px solid #7a7a7a;"></div>
<div class="a" style="left:750px;top:398px;width:188px;height:15px;background:#3399ff;"></div>
<div class="t" style="left:751.9px;top:401px;font-size:12px;color:#fff;letter-spacing:0.10px;">320 x 480, scale = 1 (160 dpi)</div>
<div class="a" style="left:749px;top:512px;width:80px;height:31px;background:linear-gradient(#f2f2f2,#ececec 45%,#e5e5e5 55%,#dfdfdf);border:1px solid #acacac;"></div>
<div class="t" style="left:757.8px;top:522px;font-size:11.5px;color:#000;letter-spacing:-0.29px;">New Variant</div>
<div class="a" style="left:837px;top:512px;width:102px;height:31px;background:#f4f4f4;border:1px solid #d6d6d6;"></div>
<div class="t" style="left:845.6px;top:522px;font-size:11.5px;color:#868686;letter-spacing:-0.41px;">Remove selected</div>
<div class="t" style="left:747.3px;top:550px;font-size:12px;color:#000;letter-spacing:0.17px;">Device details (emulator-5554) :</div>
<div class="t" style="left:747.3px;top:565px;font-size:12px;color:#000;letter-spacing:0.13px;">240 x 432, scale = 0.75 (120 dpi)</div>


<!-- ================= ABSTRACT DESIGNER ================= -->
<div id="abs" class="a"></div>
<div id="absmenu" class="a"></div>
<div id="absblack" class="a"></div>
<div class="a" style="left:1005px;top:57px;width:16px;height:16px;background:#fff;"></div>
<svg style="left:1005px;top:57px" width="16" height="16" viewBox="0 0 16 16"><text x=".8" y="13" font-family="Liberation Sans, sans-serif" font-weight="bold" font-size="14" textLength="14.5" lengthAdjust="spacingAndGlyphs" fill="#000">B4<tspan font-size="9.5">A</tspan></text></svg>
<div class="t" style="left:1025.8px;top:59px;font-size:14.67px;color:#0d1b2a;letter-spacing:-0.23px;">Abstract Designer (100%) 320x480,scal...</div>
<div class="a" style="left:1293px;top:51px;width:31px;height:20px;background:#d14a4a;"></div>
<svg style="left:1304px;top:56px" width="10" height="10" viewBox="0 0 10 10"><path d="M1.2 1.2 L8.8 8.8 M8.8 1.2 L1.2 8.8" stroke="#fff" stroke-width="1.9"/></svg>
<div class="t" style="left:1012.6px;top:85px;font-size:12px;color:#1b1b1b;letter-spacing:0.25px;"><u>L</u>ayout</div>
<div class="t" style="left:1068.5px;top:85px;font-size:12px;color:#1b1b1b;letter-spacing:0.61px;"><u>Z</u>oom</div>
<div class="t" style="left:1120.3px;top:85px;font-size:12px;color:#1b1b1b;letter-spacing:0.60px;"><u>T</u>ools</div>
<div class="t" style="left:1009.9px;top:107px;font-size:13.33px;color:#fff;letter-spacing:-0.13px;">This is the Abstract Designer.</div>
<div class="t" style="left:1009.9px;top:122px;font-size:13.33px;color:#fff;letter-spacing:-0.26px;">Connect to the emulator or</div>
<div class="t" style="left:1009.9px;top:137px;font-size:13.33px;color:#fff;letter-spacing:-0.13px;">device to start the WYSIWYG</div>
<div class="t" style="left:1009.9px;top:152px;font-size:13.33px;color:#fff;letter-spacing:-0.21px;">designer.</div>


<!-- ================= CHOOSE LAYOUT FILE DIALOG ================= -->
<div id="dlg" class="a"></div>
<div id="dlgin" class="a"></div>
<div id="dlgnav" class="a"></div>
<div id="dlgtool" class="a"></div>
<div id="dlgbody" class="a"></div>
<div class="a" style="left:22px;top:188px;width:16px;height:16px;background:#fff;"></div>
<svg style="left:22px;top:188px" width="16" height="16" viewBox="0 0 16 16"><text x=".8" y="13" font-family="Liberation Sans, sans-serif" font-weight="bold" font-size="14" textLength="14.5" lengthAdjust="spacingAndGlyphs" fill="#000">B4<tspan font-size="9.5">A</tspan></text></svg>
<div class="t" style="left:293.6px;top:190px;font-size:14.67px;color:#2b2b2b;letter-spacing:0.09px;">Choose layout file</div>
<div class="a" style="left:657px;top:182px;width:31px;height:20px;background:#c4c4c4;"></div>
<svg style="left:668px;top:188px" width="10" height="10" viewBox="0 0 10 10"><path d="M1.2 1.2 L8.8 8.8 M8.8 1.2 L1.2 8.8" stroke="#fff" stroke-width="1.9"/></svg>
<svg style="left:30.1px;top:220px" width="19" height="19" viewBox="0 0 19 19"><circle cx="9.5" cy="9.5" r="8.6" fill="none" stroke="#cdcdcd" stroke-width="1.2"/><path d="M13.5 9.5 H5.5 M9 6 L5.5 9.5 L9 13" fill="none" stroke="#cdcdcd" stroke-width="1.6"/></svg>
<svg style="left:58.8px;top:220px" width="19" height="19" viewBox="0 0 19 19"><circle cx="9.5" cy="9.5" r="8.6" fill="none" stroke="#cdcdcd" stroke-width="1.2"/><path d="M5.5 9.5 H13.5 M10 6 L13.5 9.5 L10 13" fill="none" stroke="#cdcdcd" stroke-width="1.6"/></svg>
<svg style="left:89px;top:228px" width="7" height="4" viewBox="0 0 7 4"><path d="M0 0 H7 L3.5 3.6Z" fill="#c9c9c9"/></svg>
<svg style="left:110px;top:223px" width="10" height="13" viewBox="0 0 10 13"><path d="M5 12.5 V1.5 M1 5.5 L5 1.2 L9 5.5" fill="none" stroke="#5e5e5e" stroke-width="1.7"/></svg>
<div class="a" style="left:128px;top:219px;width:333px;height:22px;background:#fff;border:1px solid #d9d9d9;"></div>
<div class="a" style="left:435px;top:220px;width:1px;height:20px;background:#d9d9d9;"></div>
<svg style="left:132px;top:221px" width="14" height="16" viewBox="0 0 14 16"><path d="M.5 2.5 L2 .8 H6 L7 2.5 H12.5 V15 H.5Z" fill="#f3d679" stroke="#d1ae44" stroke-width=".8"/><path d="M6.5 2.5 C9 4 9.5 10 8 15 H12.5 V2.5Z" fill="#e8bf52"/><rect x="11" y="10" width="1.5" height="3" fill="#5fae7e"/></svg>
<div class="t" style="left:151.0px;top:224px;font-size:12px;color:#333;letter-spacing:3.03px;">«</div>
<div class="t" style="left:167.9px;top:224px;font-size:12px;color:#000;letter-spacing:-0.05px;">basic4android</div>
<svg style="left:251px;top:227px" width="5" height="8" viewBox="0 0 5 8"><path d="M.5 .5 L4.5 4 L.5 7.5Z" fill="#666"/></svg>
<div class="t" style="left:264.6px;top:224px;font-size:12px;color:#000;letter-spacing:-0.46px;">Files</div>
<svg style="left:422px;top:227px" width="9" height="7" viewBox="0 0 9 7"><path d="M1 1 L4.5 5 L8 1" fill="none" stroke="#555" stroke-width="1.7"/></svg>
<svg style="left:442px;top:224px" width="12" height="12" viewBox="0 0 12 12"><path d="M9.6 3.3 A4.6 4.6 0 1 0 10.6 6.5" fill="none" stroke="#6a6a6a" stroke-width="1.5"/><path d="M7 .3 L10.8 .8 L10 4.6Z" fill="#6a6a6a"/></svg>
<div class="a" style="left:473px;top:219px;width:202px;height:22px;background:#fff;border:1px solid #d9d9d9;"></div>
<div class="t" style="left:481.3px;top:225px;font-size:12px;color:#6d6d6d;letter-spacing:-0.39px;">Search Files</div>
<svg style="left:654px;top:224px" width="12" height="12" viewBox="0 0 12 12"><circle cx="7.5" cy="4.5" r="3.2" fill="none" stroke="#666" stroke-width="1.5"/><path d="M5.2 6.8 L1 11" stroke="#666" stroke-width="1.8"/></svg>
<div class="t" style="left:37.8px;top:258px;font-size:12px;color:#1e395b;letter-spacing:-0.11px;">Organize</div>
<svg style="left:91px;top:262px" width="8" height="5" viewBox="0 0 8 5"><path d="M0 0 H7.4 L3.7 4.2Z" fill="#1e395b"/></svg>
<div class="t" style="left:129.1px;top:258px;font-size:12px;color:#1e395b;letter-spacing:0.16px;">New folder</div>
<svg style="left:565px;top:256px" width="16" height="16" viewBox="0 0 16 16"><rect x=".5" y=".5" width="6.5" height="6" fill="#e8f0f8" stroke="#7a8aa0" stroke-width=".8"/><rect x="1.5" y="2.5" width="4.5" height="3" fill="#3d7bc4"/><rect x=".5" y="8.5" width="6.5" height="6" fill="#e8f0f8" stroke="#7a8aa0" stroke-width=".8"/><rect x="1.5" y="10" width="4.5" height="3.5" fill="#8fbf3f"/><path d="M9 2.5 H15 M9 5 H13.5 M9 10.5 H15 M9 13 H13.5" stroke="#3a4a66" stroke-width="1"/></svg>
<svg style="left:590px;top:262px" width="8" height="5" viewBox="0 0 8 5"><path d="M0 0 H7.4 L3.7 4.2Z" fill="#1e2f4d"/></svg>
<svg style="left:619px;top:256px" width="17" height="15" viewBox="0 0 17 15"><rect x=".6" y=".6" width="15.5" height="13.6" fill="#fff" stroke="#6f7f96" stroke-width="1.1"/><rect x="1" y="1" width="14.8" height="2.2" fill="#8a98ad"/><rect x="10" y="3.5" width="5.6" height="10.2" fill="#a8cdf2"/><path d="M5.5 3 V14 M10 3 V14" stroke="#6f7f96" stroke-width=".9"/></svg>
<svg style="left:656px;top:256px" width="16" height="16" viewBox="0 0 16 16"><circle cx="8" cy="8" r="7.3" fill="#2c5fc4" stroke="#b9c4d8" stroke-width="1.2"/><circle cx="8" cy="6" r="5" fill="#4a7fe0" opacity=".6"/></svg>
<div class="t" style="left:660.5px;top:259px;font-size:12px;color:#fff;font-weight:bold;">?</div>
<div class="a" style="left:161px;top:279px;width:16px;height:298px;background:#f0f0f0;"></div>
<div class="a" style="left:161px;top:297px;width:16px;height:155px;background:#cbcbcb;"></div>
<svg style="left:165px;top:285px" width="8" height="6" viewBox="0 0 8 6"><path d="M1 5 L4 1.6 L7 5" fill="none" stroke="#555" stroke-width="1.6"/></svg>
<svg style="left:165px;top:565px" width="8" height="6" viewBox="0 0 8 6"><path d="M1 1 L4 4.4 L7 1" fill="none" stroke="#555" stroke-width="1.6"/></svg>
<div class="a" style="left:21px;top:437px;width:139px;height:20px;background:#f5f5f5;border:1px solid #dcdcdc;"></div>
<div class="t" style="left:60.5px;top:294px;font-size:12px;color:#000;letter-spacing:-0.16px;">Favorites</div>
<div class="t" style="left:70.8px;top:315px;font-size:12px;color:#000;letter-spacing:-0.06px;">Desktop</div>
<div class="t" style="left:70.8px;top:336px;font-size:12px;color:#000;letter-spacing:0.04px;">Downloads</div>
<div class="t" style="left:70.8px;top:357px;font-size:12px;color:#000;letter-spacing:-0.27px;">Recent places</div>
<div class="t" style="left:70.8px;top:378px;font-size:12px;color:#000;letter-spacing:-0.27px;">SkyDrive</div>
<div class="t" style="left:60.5px;top:420px;font-size:12px;color:#000;letter-spacing:-0.11px;">Libraries</div>
<div class="t" style="left:70.8px;top:441px;font-size:12px;color:#000;letter-spacing:0.15px;">Documents</div>
<div class="t" style="left:70.8px;top:462px;font-size:12px;color:#000;letter-spacing:0.32px;">Music</div>
<div class="t" style="left:70.8px;top:483px;font-size:12px;color:#000;letter-spacing:-0.08px;">Pictures</div>
<div class="t" style="left:70.8px;top:504px;font-size:12px;color:#000;letter-spacing:-0.13px;">Videos</div>
<div class="t" style="left:60.6px;top:546px;font-size:12px;color:#000;letter-spacing:0.40px;">Homegroup</div>
<svg style="left:40px;top:291.5px" width="16" height="16" viewBox="0 0 16 16"><path d="M8 .8 L10.2 5.8 L15.5 6.3 L11.5 9.9 L12.7 15.2 L8 12.4 L3.3 15.2 L4.5 9.9 L.5 6.3 L5.8 5.8Z" fill="#fbc84a" stroke="#e59a1f" stroke-width="1"/></svg>
<svg style="left:50px;top:312.5px" width="16" height="16" viewBox="0 0 16 16"><rect x=".5" y="2.5" width="15" height="10" fill="#2f5fd0" stroke="#5a6a86"/><rect x="1.5" y="3.5" width="13" height="5" fill="#5f8ff0" opacity=".7"/><rect x="1" y="12" width="14" height="1.8" fill="#9aa6bb"/></svg>
<svg style="left:50px;top:333.5px" width="16" height="16" viewBox="0 0 16 16"><path d="M1.5 2 L3 .8 H7 V14.5 H1.5Z" fill="#f3d679" stroke="#d1ae44" stroke-width=".7"/><path d="M7 1.5 C9.5 4 9.5 10 8 14.5 H7Z" fill="#e8bf52"/><path d="M9.5 6 H12.5 V10 H14.8 L11 14.8 L7.2 10 H9.5Z" fill="#2f8fe0" stroke="#1b6dbb" stroke-width=".6"/></svg>
<svg style="left:50px;top:354.5px" width="16" height="16" viewBox="0 0 16 16"><rect x="4.5" y="2.5" width="10" height="8.5" fill="#eef3f8" stroke="#8a96a8" stroke-width=".9"/><rect x="6" y="4" width="3" height="2.5" fill="#4a90d9"/><rect x="10" y="4" width="3" height="2.5" fill="#4a90d9"/><rect x="6" y="7.5" width="7" height="2" fill="#4a90d9"/><circle cx="3.6" cy="3.8" r="3.1" fill="#fff" stroke="#8a8a8a" stroke-width=".9"/><path d="M3.6 2 V3.9 H5" fill="none" stroke="#555" stroke-width=".8"/><path d="M2 11.5 H14 L15.5 15 H.8Z" fill="#cfd4da" stroke="#8a8f96" stroke-width=".7"/></svg>
<svg style="left:50px;top:375.5px" width="16" height="16" viewBox="0 0 16 16"><path d="M3.5 13 C.5 13 0 9.5 2.6 8.8 C2.4 6.6 5 5.4 6.6 6.8 C7.6 4.2 11.6 4.4 12.2 7.4 C15.4 7.2 16.2 12.4 13 13Z" fill="#1f55b8"/><path d="M5 13 C3 13 2.8 10.8 4.6 10.4 C5 8.6 7.6 8.6 8.2 10 C10 9.6 11 12.6 9 13Z" fill="#fff" opacity=".9"/></svg>
<svg style="left:40px;top:417.5px" width="16" height="16" viewBox="0 0 16 16"><path d="M.8 3 L2 1.6 H6.5 L7.5 3 H15 V13.5 H.8Z" fill="#f3d679" stroke="#d1ae44" stroke-width=".8"/><path d="M3 8 H13 V15 H10 V11.5 H6 V15 H3Z" fill="#5aa5e0" stroke="#3a7fc0" stroke-width=".7"/><rect x="1.5" y="4" width="13" height="2.5" fill="#fbe9a8"/></svg>
<svg style="left:50px;top:438.5px" width="16" height="16" viewBox="0 0 16 16"><path d="M2.5 .6 H10.5 L13.5 3.6 V15.4 H2.5Z" fill="#fff" stroke="#7d8794" stroke-width="1"/><path d="M4.5 4.5 H8 M4.5 7 H11.5 M4.5 9.5 H11.5 M4.5 12 H11.5" stroke="#9aa3ae" stroke-width=".9"/><rect x="8.5" y="3.5" width="3" height="2.4" fill="#3d7bc4"/></svg>
<svg style="left:50px;top:459.5px" width="16" height="16" viewBox="0 0 16 16"><path d="M7.2 1 V12" stroke="#2a8ad6" stroke-width="1.8"/><path d="M7 .6 C9 3 13.4 4 12.4 9.4 C11.6 6.6 9.4 6 7.4 5.4Z" fill="#3a9be2"/><ellipse cx="5" cy="12.2" rx="3.6" ry="2.9" fill="#2a8ad6"/><ellipse cx="4.2" cy="11.4" rx="1.6" ry="1" fill="#8fd0fa"/></svg>
<svg style="left:50px;top:480.5px" width="16" height="16" viewBox="0 0 16 16"><rect x=".8" y="2" width="14.4" height="11.5" fill="#fff" stroke="#6f7a88" stroke-width="1"/><rect x="2.3" y="3.5" width="11.4" height="8.5" fill="#8fd0f0"/><path d="M2.3 12 V9.5 L6 7 L9.5 9.5 L13.7 8 V12Z" fill="#2f8f5a"/></svg>
<svg style="left:50px;top:501.5px" width="16" height="16" viewBox="0 0 16 16"><rect x="1" y="1" width="14" height="14" fill="#3a3a3a"/><rect x="4" y="1.8" width="8" height="5.6" fill="#5aa0e0"/><rect x="4" y="8.6" width="8" height="5.6" fill="#e09a4a"/><path d="M2.5 2 V15 M13.5 2 V15" stroke="#e8e8e8" stroke-width="1.2" stroke-dasharray="1.4 1.4"/></svg>
<svg style="left:40px;top:543.5px" width="16" height="16" viewBox="0 0 16 16"><circle cx="8.4" cy="4" r="3.6" fill="#3a6fd0"/><circle cx="3.8" cy="9.6" r="3.5" fill="#3563c4"/><circle cx="12.2" cy="10.6" r="3.6" fill="#2f58b4"/><circle cx="8.2" cy="12.8" r="2.8" fill="#2f58b4"/><circle cx="8" cy="8.6" r="3" fill="#3fb04a"/><circle cx="7.2" cy="2.8" r="1.2" fill="#cfe0ff"/><circle cx="2.8" cy="8.4" r="1.2" fill="#cfe0ff"/><circle cx="11.2" cy="9.4" r="1.2" fill="#cfe0ff"/><circle cx="7.2" cy="7.6" r="1" fill="#d8ffd8"/></svg>
<svg style="left:206px;top:292px" width="33" height="44" viewBox="0 0 33 44"><path d="M1 1 H23 L32 10 V42.5 H1Z" fill="#fdfdfd" stroke="#c9c9c9" stroke-width="1.2"/><path d="M23 1 V10 H32" fill="#f0f0f0" stroke="#c9c9c9" stroke-width="1.1"/><path d="M2 43 H32" stroke="#dadada" stroke-width="1"/></svg>
<div class="t" style="left:250.2px;top:291px;font-size:12px;color:#000;letter-spacing:-0.04px;">sample2.bal</div>
<div class="t" style="left:250.3px;top:306px;font-size:12px;color:#6d6d6d;letter-spacing:-0.24px;">BAL File</div>
<div class="t" style="left:250.3px;top:322px;font-size:12px;color:#6d6d6d;letter-spacing:-0.28px;">985 bytes</div>
<div class="t" style="left:149.5px;top:592px;font-size:12px;color:#000;letter-spacing:-0.19px;">File name:</div>
<div class="a" style="left:209px;top:586px;width:261px;height:23px;background:#fff;border:1px solid #a9adb5;"></div>
<div class="a" style="left:210px;top:587px;width:242px;height:21px;overflow:hidden;"></div>
<div class="t" style="left:206.8px;top:593px;font-size:12px;color:#000;letter-spacing:0.12px;">e2u\Documents\basic4android\Files\sample2</div>
<div class="a" style="left:204px;top:587px;width:6px;height:21px;background:#f0f0f0;"></div>
<div class="a" style="left:209px;top:586px;width:1px;height:23px;background:#a9adb5;"></div>
<svg style="left:458px;top:596px" width="8" height="6" viewBox="0 0 8 6"><path d="M.8 .8 L3.8 4.4 L6.8 .8" fill="none" stroke="#444" stroke-width="1.6"/></svg>
<div class="a" style="left:482px;top:586px;width:188px;height:23px;background:linear-gradient(#f1f1f1,#eaeaea 45%,#e3e3e3 55%,#dddddd);border:1px solid #acacac;"></div>
<div class="t" style="left:485.3px;top:592px;font-size:12px;color:#000;letter-spacing:0.01px;">B4A layouts</div>
<svg style="left:657.5px;top:596px" width="8" height="6" viewBox="0 0 8 6"><path d="M.8 .8 L3.8 4.4 L6.8 .8" fill="none" stroke="#444" stroke-width="1.6"/></svg>
<div class="a" style="left:483px;top:616px;width:86px;height:24px;background:linear-gradient(#f2f2f2,#ececec 45%,#e5e5e5 55%,#dfdfdf);border:1px solid #acacac;"></div>
<div class="t" style="left:510.9px;top:622px;font-size:12px;color:#000;letter-spacing:-0.02px;">Open</div>
<div class="a" style="left:583px;top:616px;width:86px;height:24px;background:linear-gradient(#f2f2f2,#ececec 45%,#e5e5e5 55%,#dfdfdf);border:1px solid #acacac;"></div>
<div class="t" style="left:607.9px;top:622px;font-size:12px;color:#000;letter-spacing:-0.23px;">Cancel</div>
<svg style="left:676px;top:643px" width="9" height="9" viewBox="0 0 9 9"><g fill="#b5b5b5"><rect x="6" y="0" width="2" height="2"/><rect x="3" y="3" width="2" height="2"/><rect x="6" y="3" width="2" height="2"/><rect x="0" y="6" width="2" height="2"/><rect x="3" y="6" width="2" height="2"/><rect x="6" y="6" width="2" height="2"/></g></svg>

</body>
</html>
